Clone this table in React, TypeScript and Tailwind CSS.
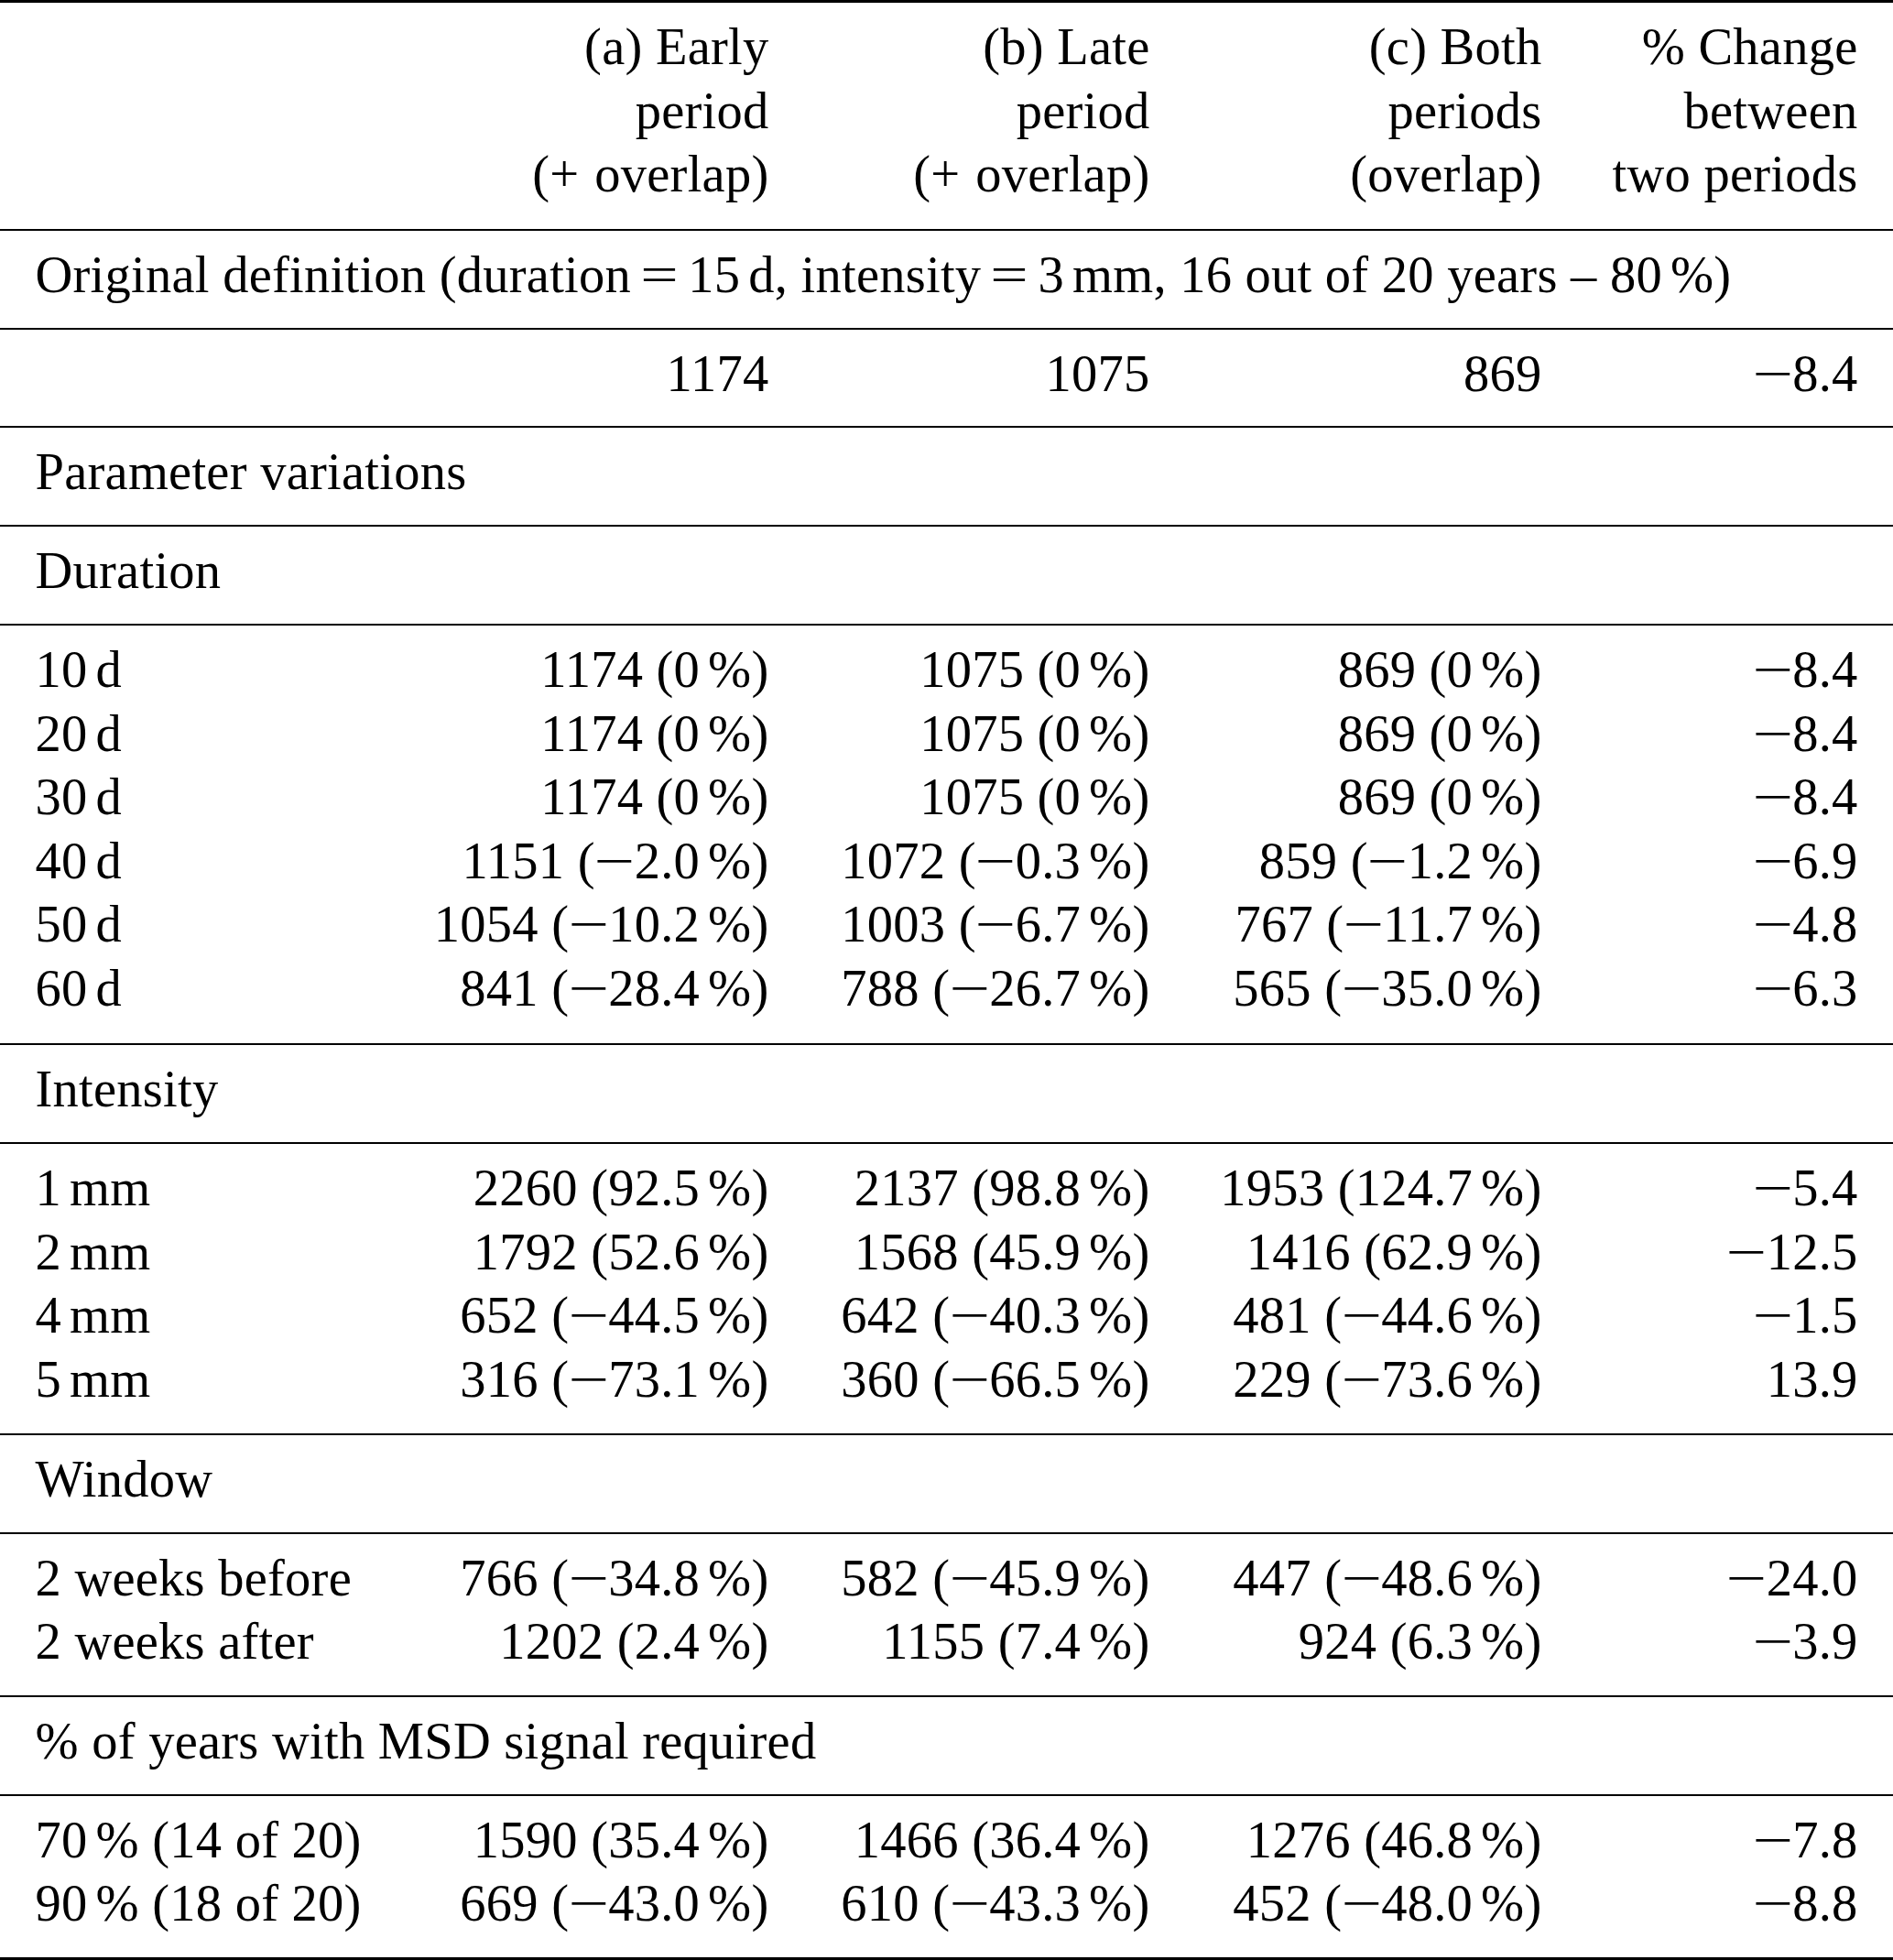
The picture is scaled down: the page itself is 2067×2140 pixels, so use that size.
import React from "react";

// thin space as in the typeset table
const T = () => <span className="inline-block w-[0.16em]" />;

// math minus, wider than the text one
const Minus = () => (
  <span className="inline-block w-[0.76em] text-center">
    <span className="inline-block scale-x-[1.4]">−</span>
  </span>
);

function Txt({ s }: { s: string }) {
  const out: React.ReactNode[] = [];
  s.split("~").forEach((p, i) => {
    if (i > 0) out.push(<T key={`t${i}`} />);
    p.split("−").forEach((q, j) => {
      if (j > 0) out.push(<Minus key={`m${i}-${j}`} />);
      if (q) out.push(<React.Fragment key={`s${i}-${j}`}>{q}</React.Fragment>);
    });
  });
  return <>{out}</>;
}

const Eq = () => (
  <span className="inline-block w-[1.1em] text-center">
    <span className="inline-block scale-x-[1.3]">=</span>
  </span>
);

const Plus = () => (
  <>
    (+<span className="inline-block w-[0.3em]" />
  </>
);

const cols = "grid grid-cols-[431px_370px_416px_428px_345px]";

type Row = [string, string, string, string, string];

const duration: Row[] = [
  ["10~d", "1174 (0~%)", "1075 (0~%)", "869 (0~%)", "−8.4"],
  ["20~d", "1174 (0~%)", "1075 (0~%)", "869 (0~%)", "−8.4"],
  ["30~d", "1174 (0~%)", "1075 (0~%)", "869 (0~%)", "−8.4"],
  ["40~d", "1151 (−2.0~%)", "1072 (−0.3~%)", "859 (−1.2~%)", "−6.9"],
  ["50~d", "1054 (−10.2~%)", "1003 (−6.7~%)", "767 (−11.7~%)", "−4.8"],
  ["60~d", "841 (−28.4~%)", "788 (−26.7~%)", "565 (−35.0~%)", "−6.3"],
];

const intensity: Row[] = [
  ["1~mm", "2260 (92.5~%)", "2137 (98.8~%)", "1953 (124.7~%)", "−5.4"],
  ["2~mm", "1792 (52.6~%)", "1568 (45.9~%)", "1416 (62.9~%)", "−12.5"],
  ["4~mm", "652 (−44.5~%)", "642 (−40.3~%)", "481 (−44.6~%)", "−1.5"],
  ["5~mm", "316 (−73.1~%)", "360 (−66.5~%)", "229 (−73.6~%)", "13.9"],
];

const windowRows: Row[] = [
  ["2 weeks before", "766 (−34.8~%)", "582 (−45.9~%)", "447 (−48.6~%)", "−24.0"],
  ["2 weeks after", "1202 (2.4~%)", "1155 (7.4~%)", "924 (6.3~%)", "−3.9"],
];

const years: Row[] = [
  ["70~% (14 of 20)", "1590 (35.4~%)", "1466 (36.4~%)", "1276 (46.8~%)", "−7.8"],
  ["90~% (18 of 20)", "669 (−43.0~%)", "610 (−43.3~%)", "452 (−48.0~%)", "−8.8"],
];

function Section({ title }: { title: React.ReactNode }) {
  return (
    <div className="border-t-2 border-black pt-[14px] pb-[22.2px]">
      <div>{title}</div>
    </div>
  );
}

function DataBlock({ rows, pb = "pb-[23.5px]" }: { rows: Row[]; pb?: string }) {
  return (
    <div className={`border-t-2 border-black pt-[14px] ${pb}`}>
      {rows.map((r, i) => (
        <div key={i} className={cols}>
          <div>
            <Txt s={r[0]} />
          </div>
          {r.slice(1).map((c, j) => (
            <div key={j} className="text-right">
              <Txt s={c} />
            </div>
          ))}
        </div>
      ))}
    </div>
  );
}

export default function App() {
  return (
    <div className="w-[2067px] min-h-[2140px] bg-white text-black font-['Liberation_Serif','Times_New_Roman',serif] text-[56.5px] leading-[69.6px] tracking-[0.25px] whitespace-nowrap">
      <div className="border-t-[3px] border-b-[3px] border-black">
        <div className="pl-[38.5px] pr-[37.7px] pt-[14px] pb-[24px]">
          <div className={cols}>
            <div />
            <div className="text-right">
              <div>(a) Early</div>
              <div>period</div>
              <div>
                <Plus />
                overlap)
              </div>
            </div>
            <div className="text-right">
              <div>(b) Late</div>
              <div>period</div>
              <div>
                <Plus />
                overlap)
              </div>
            </div>
            <div className="text-right">
              <div>(c) Both</div>
              <div>periods</div>
              <div>(overlap)</div>
            </div>
            <div className="text-right">
              <div>% Change</div>
              <div>between</div>
              <div>two periods</div>
            </div>
          </div>
        </div>

        <div className="[&>div]:pl-[38.5px] [&>div]:pr-[37.7px]">
          <Section
            title={
              <>
                Original definition (duration
                <Eq />
                15
                <T />
                d, intensity
                <Eq />3
                <T />
                mm, 16 out of 20 years – 80
                <T />
                %)
              </>
            }
          />
          <DataBlock rows={[["", "1174", "1075", "869", "−8.4"]]} pb="pb-[22.2px]" />
          <Section title="Parameter variations" />
          <Section title="Duration" />
          <DataBlock rows={duration} pb="pb-[24.7px]" />
          <Section title="Intensity" />
          <DataBlock rows={intensity} />
          <Section title="Window" />
          <DataBlock rows={windowRows} pb="pb-[23px]" />
          <Section title="% of years with MSD signal required" />
          <DataBlock rows={years} pb="pb-[23px]" />
        </div>
      </div>
    </div>
  );
}
